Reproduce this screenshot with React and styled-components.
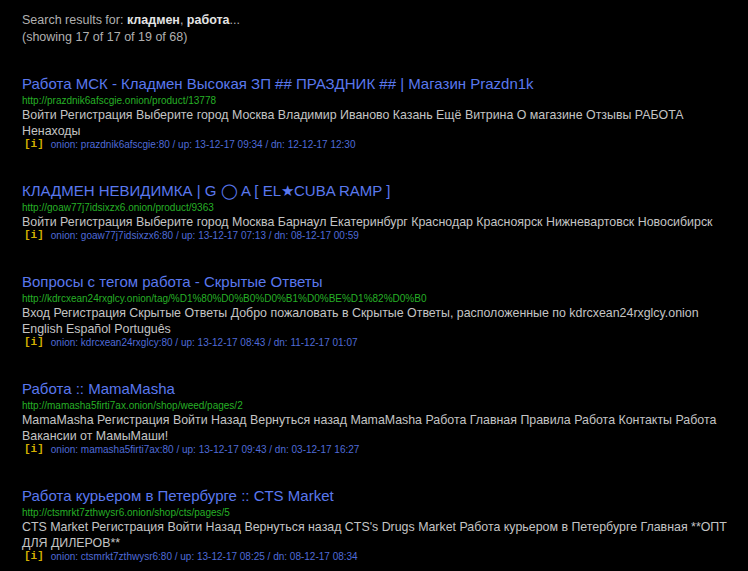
import React from "react";
import styled, { createGlobalStyle } from "styled-components";

const Global = createGlobalStyle`
  html, body { margin: 0; padding: 0; background: #000; }
  body { font-family: "Liberation Sans", Arial, sans-serif; }
`;

const Page = styled.div`
  background: #000;
  min-height: 571px;
  padding: 12px 13px 0 22px;
  box-sizing: border-box;
  width: 748px;
`;

const Header = styled.div`
  color: #b0b0b0;
  font-size: 12.5px;
  line-height: 17px;
  margin-bottom: 29px;
`;

const Query = styled.b`
  color: #e4e4e4;
`;

const Results = styled.div`
  display: flex;
  flex-direction: column;
  gap: 32px;
`;

const Result = styled.div`
  display: flex;
  flex-direction: column;
`;

const Title = styled.a`
  color: #5a78ee;
  font-size: 15px;
  line-height: 18px;
  text-decoration: none;
`;

const Url = styled.div`
  color: #26b026;
  font-size: 10px;
  line-height: 13px;
  margin-top: 1px;
`;

const Snippet = styled.div`
  color: #c4c4c4;
  font-size: 12.4px;
  line-height: 16px;
`;

const Info = styled.div`
  display: flex;
  align-items: center;
  gap: 7px;
  font-size: 10px;
  line-height: 11px;
  color: #4f6bd8;
  padding-left: 2px;
`;

const Badge = styled.span`
  color: #d4b000;
  font-family: "Liberation Mono", "Courier New", monospace;
  font-weight: bold;
  font-size: 11px;
`;

const results = [
  {
    title: "Работа МСК - Кладмен Высокая ЗП ## ПРАЗДНИК ## | Магазин Prazdn1k",
    url: "http://prazdnik6afscgie.onion/product/13778",
    snippet:
      "Войти Регистрация Выберите город Москва Владимир Иваново Казань Ещё Витрина О магазине Отзывы РАБОТА Ненаходы",
    info: "onion: prazdnik6afscgie:80 / up: 13-12-17 09:34 / dn: 12-12-17 12:30",
  },
  {
    title: "КЛАДМЕН НЕВИДИМКА | G ◯ A [ EL★CUBA RAMP ]",
    url: "http://goaw77j7idsixzx6.onion/product/9363",
    snippet:
      "Войти Регистрация Выберите город Москва Барнаул Екатеринбург Краснодар Красноярск Нижневартовск Новосибирск",
    info: "onion: goaw77j7idsixzx6:80 / up: 13-12-17 07:13 / dn: 08-12-17 00:59",
  },
  {
    title: "Вопросы с тегом работа - Скрытые Ответы",
    url: "http://kdrcxean24rxglcy.onion/tag/%D1%80%D0%B0%D0%B1%D0%BE%D1%82%D0%B0",
    snippet:
      "Вход Регистрация Скрытые Ответы Добро пожаловать в Скрытые Ответы, расположенные по kdrcxean24rxglcy.onion English Español Português",
    info: "onion: kdrcxean24rxglcy:80 / up: 13-12-17 08:43 / dn: 11-12-17 01:07",
  },
  {
    title: "Работа :: MamaMasha",
    url: "http://mamasha5firti7ax.onion/shop/weed/pages/2",
    snippet:
      "MamaMasha Регистрация Войти Назад Вернуться назад MamaMasha Работа Главная Правила Работа Контакты Работа Вакансии от МамыМаши!",
    info: "onion: mamasha5firti7ax:80 / up: 13-12-17 09:43 / dn: 03-12-17 16:27",
  },
  {
    title: "Работа курьером в Петербурге :: CTS Market",
    url: "http://ctsmrkt7zthwysr6.onion/shop/cts/pages/5",
    snippet:
      "CTS Market Регистрация Войти Назад Вернуться назад CTS's Drugs Market Работа курьером в Петербурге Главная **ОПТ ДЛЯ ДИЛЕРОВ**",
    info: "onion: ctsmrkt7zthwysr6:80 / up: 13-12-17 08:25 / dn: 08-12-17 08:34",
  },
];

export default function App() {
  return (
    <Page>
      <Global />
      <Header>
        Search results for: <Query>кладмен</Query>, <Query>работа</Query>...
        <br />
        (showing 17 of 17 of 19 of 68)
      </Header>
      <Results>
        {results.map((r) => (
          <Result key={r.url}>
            <Title href="#">{r.title}</Title>
            <Url>{r.url}</Url>
            <Snippet>{r.snippet}</Snippet>
            <Info>
              <Badge>[i]</Badge>
              <span>{r.info}</span>
            </Info>
          </Result>
        ))}
      </Results>
    </Page>
  );
}
